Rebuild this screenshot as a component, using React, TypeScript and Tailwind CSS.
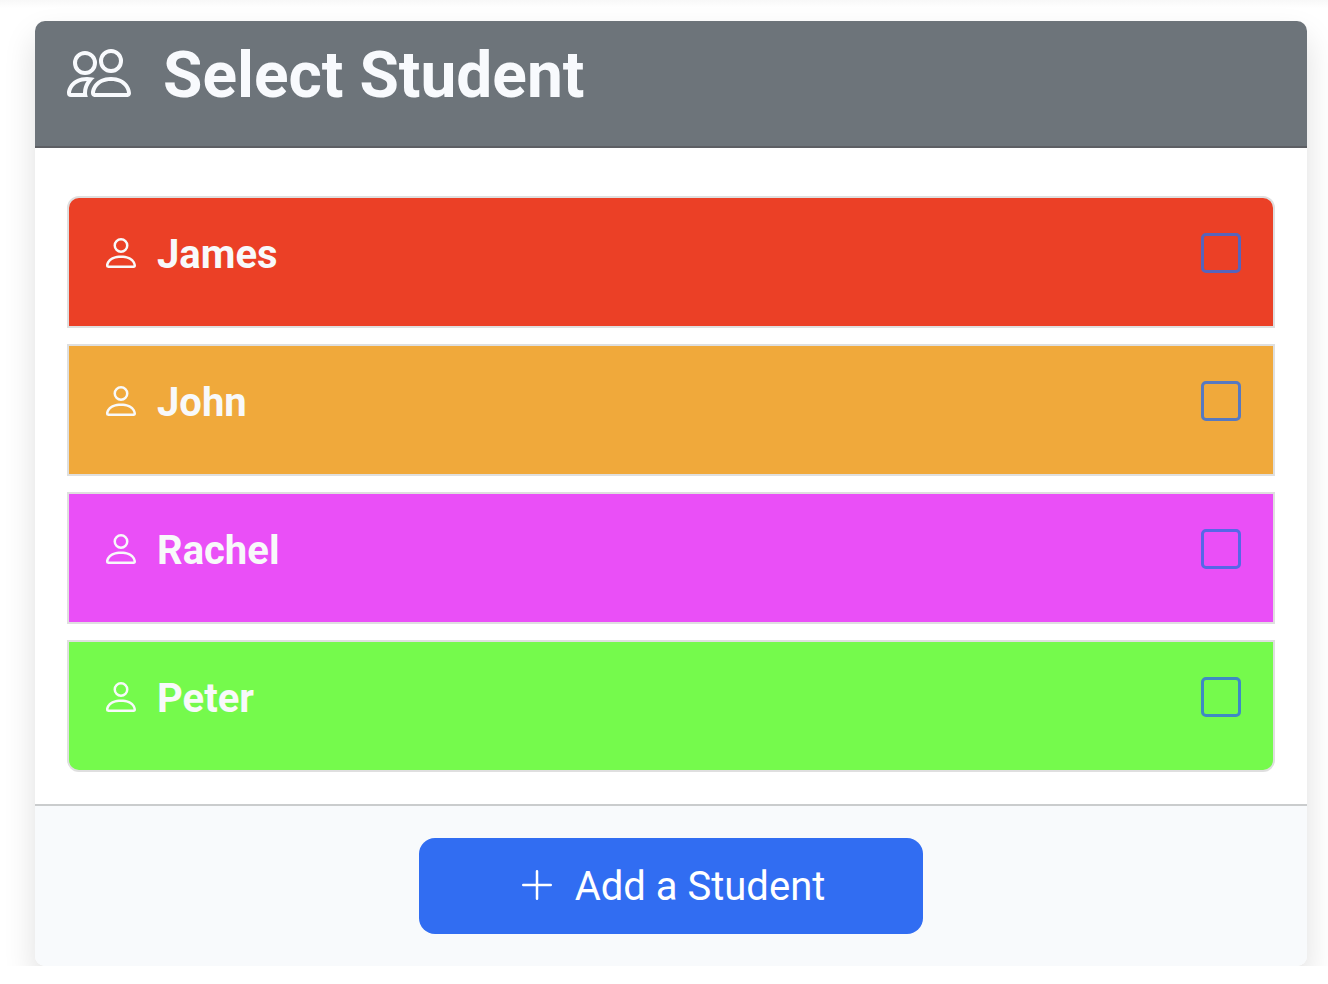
import { BsPerson, BsPlusLg } from "react-icons/bs";

type Student = { name: string; color: string };

const students: Student[] = [
  { name: "James", color: "bg-[#eb4026]" },
  { name: "John", color: "bg-[#f0a93b]" },
  { name: "Rachel", color: "bg-[#ea4ff7]" },
  { name: "Peter", color: "bg-[#75fa4c]" },
];

function PeopleIcon() {
  return (
    <svg
      viewBox="0 0 16 16"
      fill="currentColor"
      fillRule="evenodd"
      aria-hidden="true"
      className="size-16 shrink-0"
    >
      <path d="M15 14s1 0 1-1-1-4-5-4-5 3-5 4 1 1 1 1h8zM7.022 13h7.956l.022-.004c-.002-.264-.167-1.03-.76-1.72C13.688 10.629 12.718 10 11 10c-1.717 0-2.687.63-3.24 1.276-.593.69-.759 1.457-.76 1.72L7.022 13zM11 7a2 2 0 1 0 0-4 2 2 0 0 0 0 4zm3-2a3 3 0 1 1-6 0 3 3 0 0 1 6 0z" />
      <path d="M6.936 9.28a5.88 5.88 0 0 0-1.23-.247A7.35 7.35 0 0 0 5 9c-4 0-5 3-5 4 0 .667.333 1 1 1h4.216A2.238 2.238 0 0 1 5 13c0-1.01.377-2.042 1.09-2.904.243-.294.526-.569.846-.816zM4.92 10c-1.668.02-2.615.64-3.16 1.276C1.163 11.97 1 12.739 1 13h3c0-1.045.323-2.086.92-3zM1.5 5.5a3 3 0 1 1 6 0 3 3 0 0 1-6 0zm3-2a2 2 0 1 0 0 4 2 2 0 0 0 0-4z" />
    </svg>
  );
}

function StudentRow({ name, color }: Student) {
  return (
    <li
      className={`flex items-start justify-between border-2 border-[#dfdfdf] px-8 pt-[35px] pb-[49px] first:rounded-t-xl last:rounded-b-xl ${color}`}
    >
      <label
        htmlFor={`student-${name}`}
        className="flex items-start gap-4 text-[40px] leading-[44px] font-bold text-[#f8f9fa]"
      >
        <BsPerson aria-hidden="true" className="size-10 shrink-0" />
        {name}
      </label>
      <input
        id={`student-${name}`}
        type="checkbox"
        className="size-10 shrink-0 appearance-none rounded-[5px] border-3 border-[#316de2]/80 checked:bg-[#316df2]"
      />
    </li>
  );
}

export default function App() {
  return (
    <main className="overflow-hidden bg-linear-to-b from-[#f8f8f8] to-white to-[8px] pt-[21px] pr-[21px] pl-[35px] font-[Roboto,sans-serif]">
      <section className="overflow-hidden rounded-[10px] bg-white shadow-[0_16px_32px_rgba(0,0,0,0.13)]">
        <header className="flex items-start gap-8 border-b-2 border-[#5d5f64] bg-[#6d747a] px-8 pt-5 pb-[35px] text-[#f8fafd]">
          <PeopleIcon />
          <h1 className="text-[64px] leading-[70px] font-bold">Select Student</h1>
        </header>
        <ul className="flex flex-col gap-4 px-8 pt-12 pb-8">
          {students.map((student) => (
            <StudentRow key={student.name} {...student} />
          ))}
        </ul>
        <footer className="flex justify-center border-t-2 border-[#cacccd] bg-[#f8fafc] py-8">
          <button
            type="button"
            className="flex h-24 w-[504px] items-start justify-center gap-[18px] rounded-2xl bg-[#316df2] pt-[27px] text-[40px] leading-[44px] text-white"
          >
            <BsPlusLg aria-hidden="true" className="size-10 shrink-0" />
            Add a Student
          </button>
        </footer>
      </section>
    </main>
  );
}
